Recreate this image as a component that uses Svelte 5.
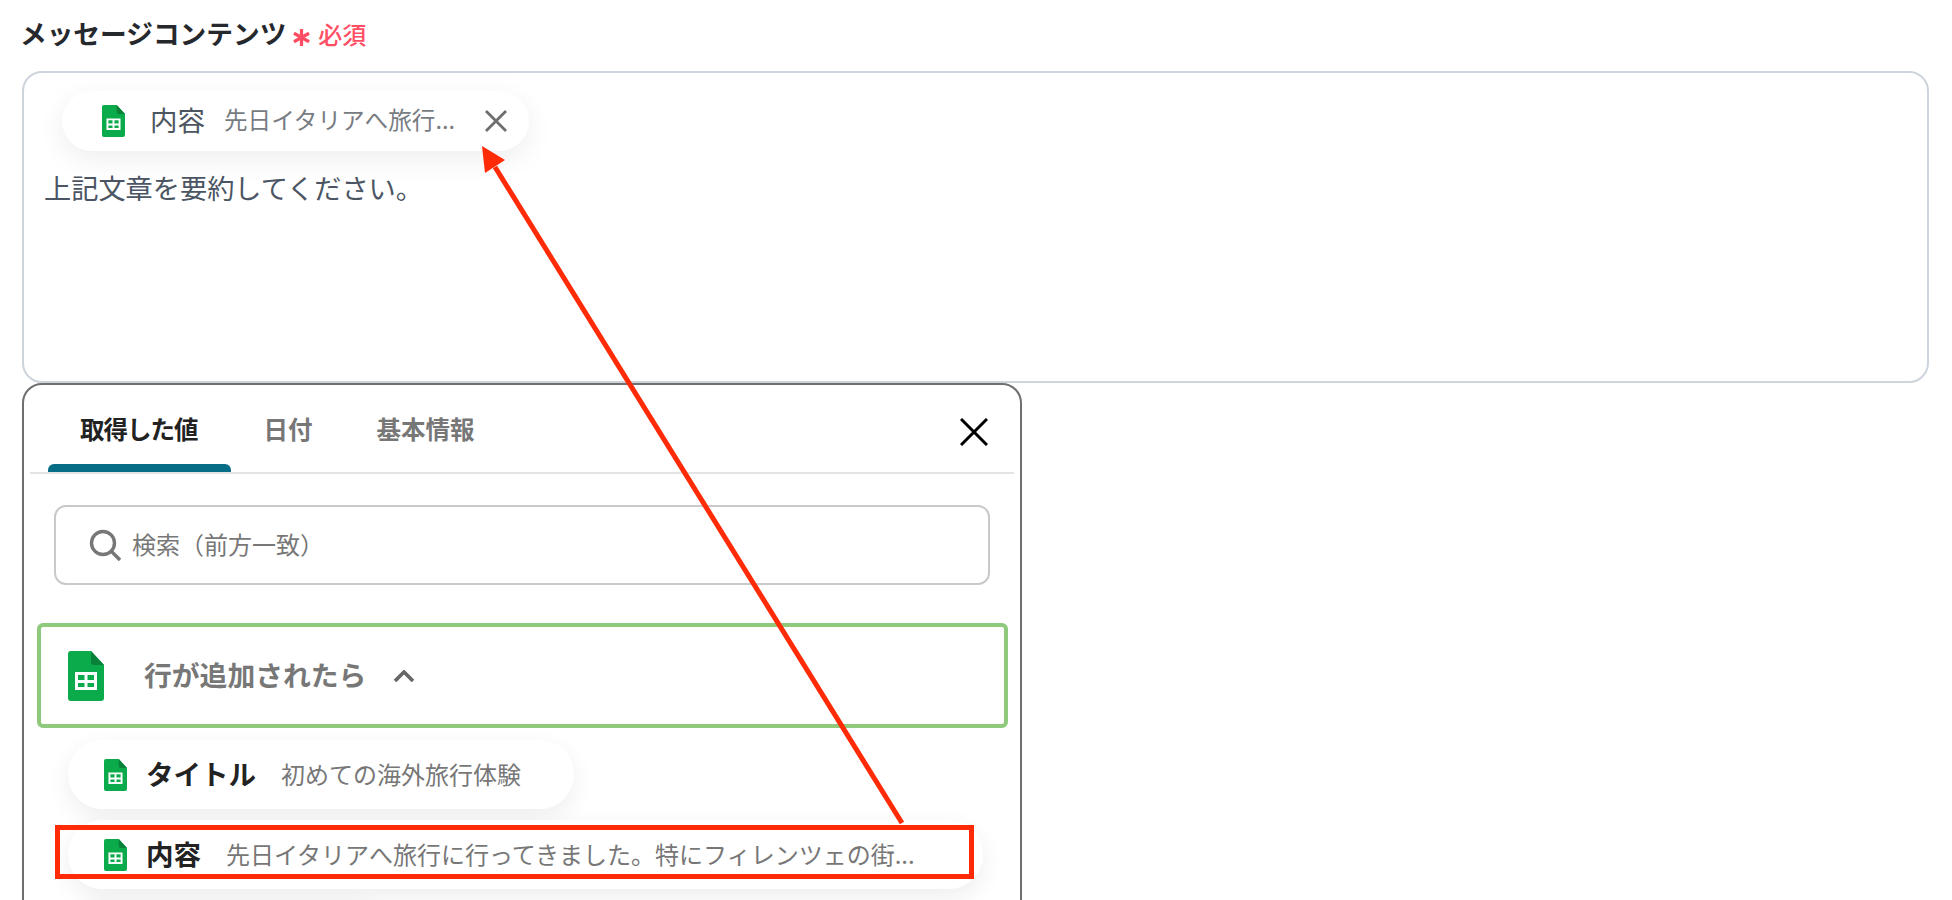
<script>
  const chips = [
    { label: 'タイトル', value: '初めての海外旅行体験', cls: 'short' },
    { label: '内容', value: '先日イタリアへ旅行に行ってきました。特にフィレンツェの街...', cls: 'long' },
    { label: '', value: '', cls: 'third' }
  ];
</script>

{#snippet sheet(cls)}
  <svg class={cls} viewBox="0 0 36 50" aria-hidden="true">
    <path d="M3 0H23L36 14V47a3 3 0 0 1-3 3H3a3 3 0 0 1-3-3V3a3 3 0 0 1 3-3Z" fill="#0bab4b" />
    <path d="M23 0L36 14H26a3 3 0 0 1-3-3Z" fill="#0a8138" />
    <path fill-rule="evenodd" d="M7 21H29V39H7ZM10 24V29H16.5V24ZM19.5 24V29H26V24ZM10 32V36H16.5V32ZM19.5 32V36H26V32Z" fill="#fff" />
  </svg>
{/snippet}

<main class="page">
  <div class="title-row">
    <span class="title">メッセージコンテンツ</span>
    <span class="required">
      <svg class="star" viewBox="0 0 18 18" aria-hidden="true">
        <path d="M9 0V18M1 4.5L17 13.5M17 4.5L1 13.5" />
      </svg>
      必須
    </span>
  </div>

  <section class="editor">
    <div class="tag">
      {@render sheet('tag-icon')}
      <span class="tag-label">内容</span>
      <span class="tag-value">先日イタリアへ旅行...</span>
      <svg class="tag-close" viewBox="0 0 24 24" aria-hidden="true">
        <path d="M2 2L22 22M22 2L2 22" />
      </svg>
    </div>
    <p class="body-text">上記文章を要約してください。</p>
  </section>

  <section class="panel">
    <div class="tabs">
      <span class="tab active">取得した値</span>
      <span class="tab">日付</span>
      <span class="tab">基本情報</span>
      <svg class="panel-close" viewBox="0 0 28 28" aria-hidden="true">
        <path d="M1 1L27 27M27 1L1 27" />
      </svg>
    </div>

    <div class="search">
      <svg class="search-icon" viewBox="0 0 32 32" aria-hidden="true">
        <circle cx="14" cy="14" r="11.5" />
        <path d="M22.5 22.5L31 31" />
      </svg>
      <span>検索（前方一致）</span>
    </div>

    <div class="group">
      {@render sheet('group-icon')}
      <span class="group-name">行が追加されたら</span>
      <svg class="chevron" viewBox="0 0 22 12" aria-hidden="true">
        <path d="M2 11L11 2L20 11" />
      </svg>
    </div>

    <div class="chips">
      {#each chips as chip}
        <div class="chip {chip.cls}">
          {#if chip.label}
            {@render sheet('chip-icon')}
            <span class="chip-label">{chip.label}</span>
            <span class="chip-value">{chip.value}</span>
          {/if}
        </div>
      {/each}
    </div>
  </section>

  <div class="highlight"></div>
  <svg class="arrow" viewBox="0 0 1952 900" aria-hidden="true">
    <path d="M902 823L495 167" />
    <polygon points="482,146 505,160 485,173" />
  </svg>
</main>

<style>
  :global(body) {
    margin: 0;
    background: #fff;
  }

  .page {
    position: relative;
    box-sizing: border-box;
    width: 1952px;
    height: 900px;
    overflow: hidden;
    padding: 0 23px 0 22px;
    font-family: "Noto Sans CJK JP", "Noto Sans", sans-serif;
    color: #222;
  }

  .title-row {
    display: flex;
    align-items: center;
    height: 71px;
    padding-bottom: 4px;
    box-sizing: border-box;
  }

  .title {
    margin-left: -2px;
    font-size: 26.7px;
    font-weight: 700;
    line-height: 1;
    color: #25282c;
  }

  .required {
    display: flex;
    align-items: center;
    margin-left: 7px;
    font-size: 24px;
    font-weight: 500;
    color: #ff4d63;
    line-height: 1;
  }

  .star {
    width: 17px;
    height: 17px;
    margin: 7px 8px 0 0;
    fill: none;
    stroke: #ff4d63;
    stroke-width: 3.4;
  }

  .editor {
    box-sizing: border-box;
    height: 312px;
    border: 2px solid #ced4dc;
    border-radius: 20px;
    padding: 18px 21px 0;
  }

  .tag {
    display: flex;
    align-items: center;
    box-sizing: border-box;
    width: 467px;
    height: 60px;
    margin-left: 17px;
    padding-left: 40px;
    border-radius: 30px;
    background: #fff;
    box-shadow: 0 8px 28px rgba(0, 0, 0, 0.07);
  }

  .tag-icon {
    width: 23px;
    height: 32px;
    flex: none;
  }

  .tag-label {
    margin: -2px 0 0 25px;
    font-size: 27.5px;
    line-height: 1;
    color: #4c5560;
  }

  .tag-value {
    margin: -2px 0 0 19px;
    width: 260px;
    font-size: 23.6px;
    line-height: 1;
    color: #777c82;
    white-space: nowrap;
  }

  .tag-close {
    width: 24px;
    height: 24px;
    flex: none;
    fill: none;
    stroke: #6e6e6e;
    stroke-width: 2.8;
  }

  .body-text {
    margin: 18px 0 0 -1px;
    font-size: 27.2px;
    line-height: 36px;
    color: #4b5563;
  }

  .panel {
    box-sizing: border-box;
    width: 1000px;
    height: 640px;
    border: 2px solid #6f6f6f;
    border-radius: 20px;
    background: #fff;
    padding: 0 6px;
  }

  .tabs {
    display: flex;
    align-items: flex-start;
    box-sizing: border-box;
    position: relative;
    height: 89px;
    border-bottom: 2px solid #e2e4e6;
    padding-left: 18px;
  }

  .tab {
    padding: 26px 32px 0;
    height: 61px;
    font-size: 24.5px;
    font-weight: 700;
    line-height: 36px;
    color: #777;
  }

  .tab:nth-child(2) {
    padding-left: 33px;
  }

  .tab.active {
    position: relative;
    padding: 26px 33px 0 32px;
    font-size: 24.5px;
    letter-spacing: -1px;
    color: #222;
  }

  .tab.active::after {
    content: "";
    position: absolute;
    left: 0;
    right: 0;
    bottom: 0;
    height: 8px;
    border-radius: 6px 6px 0 0;
    background: #076c85;
  }

  .panel-close {
    margin: 33px 26px 0 auto;
    width: 28px;
    height: 28px;
    fill: none;
    stroke: #000;
    stroke-width: 3;
  }

  .search {
    display: flex;
    align-items: center;
    box-sizing: border-box;
    width: 936px;
    height: 80px;
    margin: 31px 0 0 24px;
    padding: 0 0 2px 33px;
    border: 2px solid #c9c9c9;
    border-radius: 12px;
    font-size: 24px;
    line-height: 1;
    color: #777;
  }

  .search-icon {
    width: 32px;
    height: 32px;
    margin: 2px 11px 0 0;
    fill: none;
    stroke: #777;
    stroke-width: 3.4;
  }

  .group {
    display: flex;
    align-items: center;
    box-sizing: border-box;
    width: 971px;
    height: 105px;
    margin: 38px 0 0 7px;
    padding-left: 27px;
    border: 4px solid #8fc97c;
    border-radius: 6px;
  }

  .group-icon {
    width: 36px;
    height: 50px;
    flex: none;
  }

  .group-name {
    margin: -2px 0 0 40px;
    font-size: 27.8px;
    font-weight: 700;
    line-height: 1;
    color: #777;
  }

  .chevron {
    width: 22px;
    height: 12px;
    margin-left: 27px;
    fill: none;
    stroke: #666;
    stroke-width: 3.6;
  }

  .chips {
    display: flex;
    flex-direction: column;
    gap: 11px;
    margin: 12px 0 0 38px;
  }

  .chip {
    display: flex;
    align-items: center;
    box-sizing: border-box;
    height: 69px;
    padding-left: 36px;
    border-radius: 34px;
    background: #fff;
    box-shadow: 0 8px 24px rgba(0, 0, 0, 0.07);
  }

  .chip.short { width: 506px; }
  .chip.long { width: 915px; }
  .chip.third { width: 320px; }

  .chip-icon {
    width: 23px;
    height: 32px;
    flex: none;
  }

  .chip-label {
    margin: -1px 0 0 19px;
    font-size: 27.5px;
    font-weight: 700;
    line-height: 1;
    color: #222;
  }

  .chip-value {
    margin: -1px 0 0 25px;
    font-size: 24px;
    line-height: 1;
    color: #777;
    white-space: nowrap;
  }

  /* Annotation overlay drawn on top of the UI */
  .highlight {
    position: absolute;
    left: 55px;
    top: 825px;
    width: 919px;
    height: 54px;
    box-sizing: border-box;
    border: 5px solid #ff2a06;
  }

  .arrow {
    position: absolute;
    inset: 0;
    width: 1952px;
    height: 900px;
    pointer-events: none;
  }

  .arrow path {
    fill: none;
    stroke: #ff2a06;
    stroke-width: 5;
  }

  .arrow polygon {
    fill: #ff2a06;
  }
</style>
